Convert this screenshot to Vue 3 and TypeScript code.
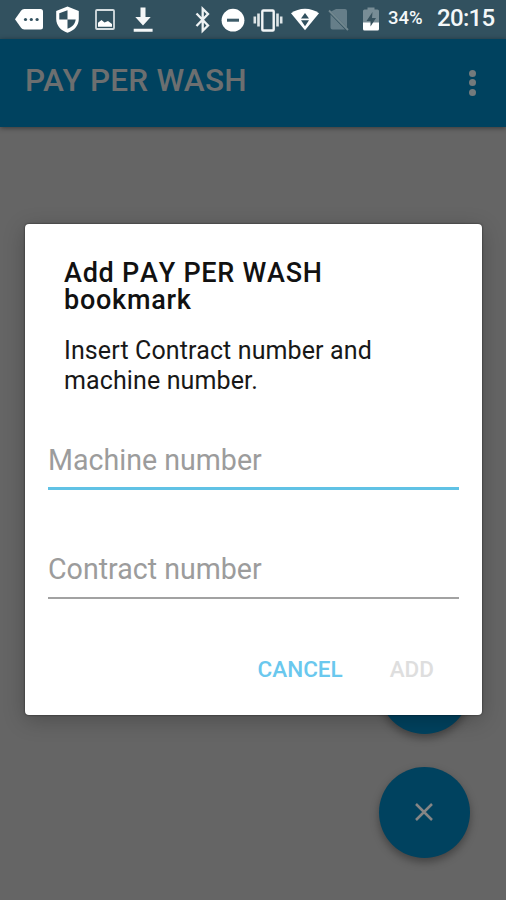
<script setup lang="ts">
import { ref } from 'vue'

interface Field {
  id: string
  label: string
  value: string
  active: boolean
}

const fields = ref<Field[]>([
  { id: 'machine', label: 'Machine number', value: '', active: true },
  { id: 'contract', label: 'Contract number', value: '', active: false },
])
</script>

<template>
  <div class="screen">
    <header class="status">
      <svg class="icons" width="170" height="39" viewBox="0 0 170 39">
        <path fill="#fff" d="M15 19.3l6-8.6q1.2-1.7 3.2-1.7h16.300q2.500 0 2.500 2.500v15.500q0 2.500-2.500 2.500H24.200q-2 0-3.200-1.700z" />
        <g fill="#32515f"><circle cx="25.500" cy="19.500" r="1.600" /><circle cx="31.300" cy="19.500" r="1.600" /><circle cx="37.100" cy="19.500" r="1.600" /></g>
        <path fill="#fff" d="M67.500 6.500l11.300 4.500v8c0 6.500-4.500 11.500-11.300 13.800C60.700 30.500 56.200 25.500 56.200 19v-8z" />
        <path fill="#32515f" d="M67.500 10.200v9.300H59.300v-6.200zM67.500 19.500h8.200c-.5 4.500-3.500 7.500-8.200 9.300z" />
        <rect x="96" y="10" width="18" height="19" rx="1" fill="none" stroke="#d5dde0" stroke-width="1.800" />
        <path fill="#fff" d="M98 26.700v-3.900l3.500-2.800 3 2.500 3.500-1.500 4 3v2.700z" />
        <path fill="#f5f7f8" d="M140.500 7.500h5v9.500h5.200l-7.700 8.500-7.700-8.500h5.200zM133.700 28.700h18.900v3.100h-18.900z" />
      </svg>
      <div class="status-right">
        <svg class="icons" width="192" height="39" viewBox="190 0 192 39">
          <path d="M196.500 13.500l11.500 12-5.300 5.200V8.800L208 14l-11.500 12" fill="none" stroke="#eef2f3" stroke-width="2.300" />
          <circle cx="233" cy="20.200" r="11.400" fill="#fff" />
          <rect x="227" y="18.700" width="12" height="3" fill="#3d5b68" />
          <rect x="262.300" y="10.500" width="11.400" height="20" rx="1" fill="none" stroke="#f2f5f6" stroke-width="2.400" />
          <path d="M258.500 13.500v13M277.500 13.500v13M254.800 16.500v7M281.200 16.500v7" stroke="#dfe6e8" stroke-width="2.600" />
          <path fill="#fff" d="M291 13.300c8-6.200 20-6.200 28 0L305 30.300z" />
          <path fill="#32515f" d="M301 18.500l4-5.500 4 5.500zM301 20.300h8l-4 6z" />
          <path fill="#667e89" d="M336 9h9q2 0 2 2v16.500l-16-16zM330.500 14.500L345 29.500h-12.500q-2 0-2-2z" />
          <path d="M329 10.500l19 19.500" stroke="#71878f" stroke-width="1.800" />
          <path fill="#788d96" d="M367.500 7.500h7v2h3q1.500 0 1.500 1.500v12h-16V11q0-1.500 1.500-1.500h3z" />
          <path fill="#fff" d="M363 22.500h16v6.500q0 1.500-1.500 1.500h-13q-1.500 0-1.500-1.500z" />
          <path fill="#38535f" d="M372.500 12l-6 9h4v5.500l5.500-8.500h-4z" />
        </svg>
        <span class="battery">34%</span>
        <time class="clock">20:15</time>
      </div>
    </header>

    <div class="appbar">
      <h1>PAY PER WASH</h1>
      <span class="more"><i /><i /><i /></span>
    </div>

    <button class="fab fab-upper" aria-hidden="true" />
    <button class="fab fab-lower">
      <svg width="20" height="20" viewBox="0 0 20 20">
        <path d="M2 2l16 16M18 2L2 18" stroke="#858585" stroke-width="2.500" />
      </svg>
    </button>

    <section class="dialog" role="dialog">
      <h2>Add PAY PER WASH<br />bookmark</h2>
      <p class="message">Insert Contract number and<br />machine number.</p>
      <div class="fields">
        <input
          v-for="f in fields"
          :key="f.id"
          v-model="f.value"
          :class="['field', { active: f.active }]"
          :placeholder="f.label"
        />
      </div>
      <div class="actions">
        <button class="cancel">CANCEL</button>
        <button class="add" disabled>ADD</button>
      </div>
    </section>
  </div>
</template>

<style>
body {
  margin: 0;
}
</style>

<style scoped>
.screen {
  position: relative;
  width: 506px;
  height: 900px;
  overflow: hidden;
  background: #656565;
  font-family: Roboto, sans-serif;
}
.screen * {
  box-sizing: border-box;
}
.status {
  display: flex;
  justify-content: space-between;
  height: 39px;
  background: #32515f;
  color: #f4f8f9;
}
.icons {
  display: block;
}
.status-right {
  display: flex;
  width: 316px;
}
.battery {
  width: 49px;
  padding-left: 6px;
  font-size: 18.500px;
  font-weight: 500;
  line-height: 37px;
  white-space: nowrap;
}
.clock {
  padding-left: 6px;
  font-size: 24px;
  font-weight: 500;
  line-height: 37px;
  letter-spacing: -0.700px;
}
.appbar {
  display: flex;
  align-items: center;
  justify-content: space-between;
  height: 88px;
  padding: 0 30px 0 25px;
  background: #00425f;
  box-shadow: 0 1px 5px rgba(0, 0, 0, 0.45);
}
h1 {
  margin: 0;
  padding-bottom: 4px;
  color: #6c6f70;
  font-size: 31.500px;
  font-weight: 500;
  line-height: 36px;
  letter-spacing: 0.250px;
}
.more {
  display: flex;
  flex-direction: column;
  gap: 2.500px;
  padding-bottom: 1px;
}
.more i {
  width: 7px;
  height: 7px;
  border-radius: 50%;
  background: #747a7c;
}
button {
  margin: 0;
  padding: 0;
  border: 0;
  background: none;
  font-family: inherit;
}
.fab {
  position: absolute;
  left: 378.500px;
  display: flex;
  align-items: center;
  justify-content: center;
  width: 91px;
  height: 91px;
  border-radius: 50%;
  background: #00425f;
  box-shadow: 0 4px 9px rgba(0, 0, 0, 0.35);
}
.fab-upper {
  top: 643px;
}
.fab-lower {
  top: 766.500px;
}
.dialog {
  position: absolute;
  top: 224px;
  left: 25px;
  width: 457px;
  height: 491px;
  padding: 36px 23px 0;
  border-radius: 4px;
  background: #fff;
  box-shadow: 0 0 2px rgba(0, 0, 0, 0.7), 0 5px 22px rgba(0, 0, 0, 0.24);
}
h2 {
  margin: 0 0 0 16px;
  color: #111;
  font-size: 27px;
  font-weight: 500;
  font-kerning: none;
  line-height: 26.500px;
  letter-spacing: 0.750px;
  white-space: nowrap;
}
.message {
  margin: 23px 0 0 16px;
  color: #181818;
  font-size: 25px;
  line-height: 29.500px;
  letter-spacing: 0.120px;
  white-space: nowrap;
}
.fields {
  display: flex;
  flex-direction: column;
  gap: 46px;
  margin-top: 32px;
}
.field {
  width: 411px;
  height: 63px;
  padding: 5px 0 0;
  border: 0;
  border-bottom: 2px solid #a2a2a2;
  border-radius: 0;
  outline: 0;
  background: none;
  font-family: inherit;
  font-size: 28.600px;
}
.field.active {
  border-bottom: 3px solid #60c2e5;
}
.field::placeholder {
  color: #9c9c9c;
  opacity: 1;
}
.actions {
  display: flex;
  justify-content: flex-end;
  gap: 47px;
  margin-top: 56px;
  padding-right: 25px;
}
.actions button {
  font-size: 22.500px;
  font-weight: 500;
  line-height: 28px;
}
.cancel {
  color: #6ac8ee;
}
.add {
  color: #dedede;
}
</style>
